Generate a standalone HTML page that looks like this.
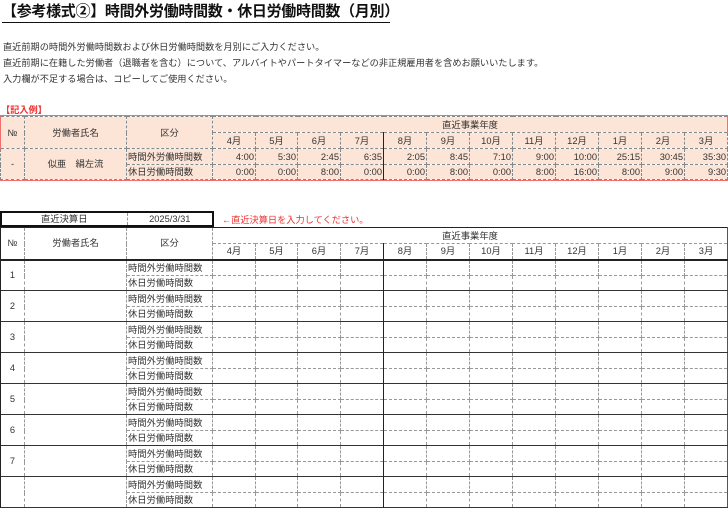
<!DOCTYPE html>
<html><head><meta charset="utf-8"><style>
body{margin:0;width:728px;height:485px;overflow:hidden;background:#fff;font-family:"Liberation Sans","Noto Sans CJK JP",sans-serif;color:#333;position:relative}
.t{position:absolute;left:2px;top:3px;font-size:15px;font-weight:bold;color:#111;border-bottom:1px solid #111;width:388px;height:19px;line-height:18px;white-space:nowrap;letter-spacing:-0.3px}
.p{position:absolute;left:3px;font-size:9.2px;white-space:nowrap;color:#333}
.r{color:#f03030}
table{position:absolute;left:0;border-collapse:collapse;table-layout:fixed;font-size:9.3px}
td{border:1px dashed #999;padding:0 2px;text-align:center;white-space:nowrap;overflow:hidden;line-height:12px}
.ex td{background:#fce4d6;border-color:#888}
.ex{outline:1px solid #f07070}
td.l{text-align:left;padding-left:1px}
td.v{text-align:right;padding-right:1px}
td.s{border-left:1px solid #222}
tr.a{height:16px}
tr.b{height:15px;border-bottom:1px solid #333}
</style></head><body>
<div class="t">【参考様式②】時間外労働時間数・休日労働時間数（月別）</div>
<div class="p" style="top:39px">直近前期の時間外労働時間数および休日労働時間数を月別にご入力ください。</div>
<div class="p" style="top:55px">直近前期に在籍した労働者（退職者を含む）について、アルバイトやパートタイマーなどの非正規雇用者を含めお願いいたします。</div>
<div class="p" style="top:71px">入力欄が不足する場合は、コピーしてご使用ください。</div>
<div class="p r" style="top:102px;left:1px;font-weight:bold">【記入例】</div>

<table class="ex" style="top:116px;width:727px">
<colgroup><col style="width:24px"><col style="width:102px"><col style="width:86px"><col style="width:43px"><col style="width:42px"><col style="width:43px"><col style="width:43px"><col style="width:43px"><col style="width:43px"><col style="width:43px"><col style="width:43px"><col style="width:43px"><col style="width:43px"><col style="width:43px"><col style="width:43px"></colgroup>
<tr style="height:16px"><td rowspan="2" style="border-left:1px solid #f07070">№</td><td rowspan="2">労働者氏名</td><td rowspan="2">区分</td><td colspan="12" style="border-right:1px solid #f07070">直近事業年度</td></tr>
<tr style="height:16px"><td>4月</td><td>5月</td><td>6月</td><td>7月</td><td class="s">8月</td><td>9月</td><td>10月</td><td>11月</td><td>12月</td><td>1月</td><td>2月</td><td>3月</td></tr>
<tr style="height:16px"><td rowspan="2">-</td><td rowspan="2">似亜　絹左流</td><td class="l">時間外労働時間数</td><td class="v">4:00</td><td class="v">5:30</td><td class="v">2:45</td><td class="v">6:35</td><td class="v s">2:05</td><td class="v">8:45</td><td class="v">7:10</td><td class="v">9:00</td><td class="v">10:00</td><td class="v">25:15</td><td class="v">30:45</td><td class="v">35:30</td></tr>
<tr style="height:15px"><td class="l">休日労働時間数</td><td class="v">0:00</td><td class="v">0:00</td><td class="v">8:00</td><td class="v">0:00</td><td class="v s">0:00</td><td class="v">8:00</td><td class="v">0:00</td><td class="v">8:00</td><td class="v">16:00</td><td class="v">8:00</td><td class="v">9:00</td><td class="v">9:30</td></tr>
</table>

<table style="top:211px;width:212px;border:2px solid #111">
<colgroup><col style="width:126px"><col style="width:86px"></colgroup>
<tr style="height:14px"><td style="border-left:none;border-top:none;border-bottom:none">直近決算日</td><td style="border-right:none;border-top:none;border-bottom:none">2025/3/31</td></tr>
</table>
<div class="p r" style="top:212px;left:222px">←直近決算日を入力してください。</div>

<table style="top:227px;width:727px;border-top:1px solid #222;border-right:1px solid #555">
<colgroup><col style="width:24px"><col style="width:102px"><col style="width:86px"><col style="width:43px"><col style="width:42px"><col style="width:43px"><col style="width:43px"><col style="width:43px"><col style="width:43px"><col style="width:43px"><col style="width:43px"><col style="width:43px"><col style="width:43px"><col style="width:43px"><col style="width:43px"></colgroup>
<tr style="height:16px"><td rowspan="2" style="border-left:1px solid #222;border-top:1px solid #222">№</td><td rowspan="2" style="border-top:1px solid #222">労働者氏名</td><td rowspan="2" style="border-top:1px solid #222">区分</td><td colspan="12" style="border-top:1px solid #222;border-right:1px solid #555">直近事業年度</td></tr>
<tr style="height:16px;border-bottom:2px solid #222"><td>4月</td><td>5月</td><td>6月</td><td>7月</td><td class="s">8月</td><td>9月</td><td>10月</td><td>11月</td><td>12月</td><td>1月</td><td>2月</td><td>3月</td></tr>
<tr class="a"><td rowspan="2" style="border-left:1px solid #222">1</td><td rowspan="2"></td><td class="l">時間外労働時間数</td><td></td><td></td><td></td><td></td><td class="s"></td><td></td><td></td><td></td><td></td><td></td><td></td><td></td></tr>
<tr class="b"><td class="l">休日労働時間数</td><td></td><td></td><td></td><td></td><td class="s"></td><td></td><td></td><td></td><td></td><td></td><td></td><td></td></tr>
<tr class="a"><td rowspan="2" style="border-left:1px solid #222">2</td><td rowspan="2"></td><td class="l">時間外労働時間数</td><td></td><td></td><td></td><td></td><td class="s"></td><td></td><td></td><td></td><td></td><td></td><td></td><td></td></tr>
<tr class="b"><td class="l">休日労働時間数</td><td></td><td></td><td></td><td></td><td class="s"></td><td></td><td></td><td></td><td></td><td></td><td></td><td></td></tr>
<tr class="a"><td rowspan="2" style="border-left:1px solid #222">3</td><td rowspan="2"></td><td class="l">時間外労働時間数</td><td></td><td></td><td></td><td></td><td class="s"></td><td></td><td></td><td></td><td></td><td></td><td></td><td></td></tr>
<tr class="b"><td class="l">休日労働時間数</td><td></td><td></td><td></td><td></td><td class="s"></td><td></td><td></td><td></td><td></td><td></td><td></td><td></td></tr>
<tr class="a"><td rowspan="2" style="border-left:1px solid #222">4</td><td rowspan="2"></td><td class="l">時間外労働時間数</td><td></td><td></td><td></td><td></td><td class="s"></td><td></td><td></td><td></td><td></td><td></td><td></td><td></td></tr>
<tr class="b"><td class="l">休日労働時間数</td><td></td><td></td><td></td><td></td><td class="s"></td><td></td><td></td><td></td><td></td><td></td><td></td><td></td></tr>
<tr class="a"><td rowspan="2" style="border-left:1px solid #222">5</td><td rowspan="2"></td><td class="l">時間外労働時間数</td><td></td><td></td><td></td><td></td><td class="s"></td><td></td><td></td><td></td><td></td><td></td><td></td><td></td></tr>
<tr class="b"><td class="l">休日労働時間数</td><td></td><td></td><td></td><td></td><td class="s"></td><td></td><td></td><td></td><td></td><td></td><td></td><td></td></tr>
<tr class="a"><td rowspan="2" style="border-left:1px solid #222">6</td><td rowspan="2"></td><td class="l">時間外労働時間数</td><td></td><td></td><td></td><td></td><td class="s"></td><td></td><td></td><td></td><td></td><td></td><td></td><td></td></tr>
<tr class="b"><td class="l">休日労働時間数</td><td></td><td></td><td></td><td></td><td class="s"></td><td></td><td></td><td></td><td></td><td></td><td></td><td></td></tr>
<tr class="a"><td rowspan="2" style="border-left:1px solid #222">7</td><td rowspan="2"></td><td class="l">時間外労働時間数</td><td></td><td></td><td></td><td></td><td class="s"></td><td></td><td></td><td></td><td></td><td></td><td></td><td></td></tr>
<tr class="b"><td class="l">休日労働時間数</td><td></td><td></td><td></td><td></td><td class="s"></td><td></td><td></td><td></td><td></td><td></td><td></td><td></td></tr>
<tr class="a"><td rowspan="2" style="border-left:1px solid #222"></td><td rowspan="2"></td><td class="l">時間外労働時間数</td><td></td><td></td><td></td><td></td><td class="s"></td><td></td><td></td><td></td><td></td><td></td><td></td><td></td></tr>
<tr class="b"><td class="l">休日労働時間数</td><td></td><td></td><td></td><td></td><td class="s"></td><td></td><td></td><td></td><td></td><td></td><td></td><td></td></tr>
</table>
</body></html>
